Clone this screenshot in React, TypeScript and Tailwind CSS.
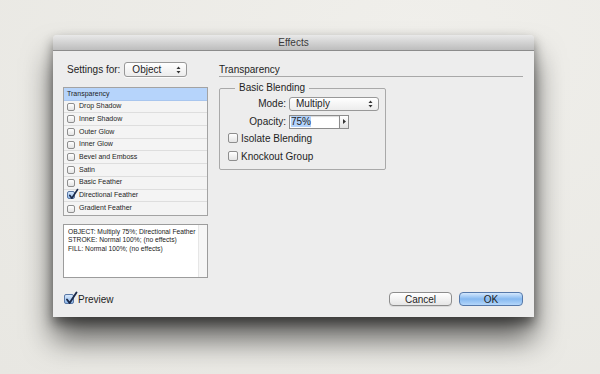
import React from 'react'

const effects = [
  { name: 'Drop Shadow', on: false },
  { name: 'Inner Shadow', on: false },
  { name: 'Outer Glow', on: false },
  { name: 'Inner Glow', on: false },
  { name: 'Bevel and Emboss', on: false },
  { name: 'Satin', on: false },
  { name: 'Basic Feather', on: false },
  { name: 'Directional Feather', on: true },
  { name: 'Gradient Feather', on: false },
]

function Check({ size, on }: { size: number; on: boolean }) {
  return (
    <span
      className={`relative shrink-0 rounded-[2px] border ${
        on
          ? 'border-[#5a78a6] bg-gradient-to-b from-[#d6e7fb] to-[#8db8ea]'
          : 'border-[#8e8e8e] bg-gradient-to-b from-white to-[#e4e4e4]'
      }`}
      style={{ width: size, height: size }}
    >
      {on && (
        <svg
          className="absolute left-0 top-[-3px] overflow-visible"
          width={size + 2}
          height={size + 3}
          viewBox="0 0 12 13"
        >
          <path d="M2 7.5 L4.6 11 L11.5 0.5" fill="none" stroke="#1b2a4a" strokeWidth="1.9" strokeLinecap="round" strokeLinejoin="round" />
        </svg>
      )}
    </span>
  )
}

function UpDown() {
  return (
    <svg width="5" height="8" viewBox="0 0 5 8" className="shrink-0">
      <path d="M0.5 3 L2.5 0.5 L4.5 3 Z" fill="#333" />
      <path d="M0.5 5 L2.5 7.5 L4.5 5 Z" fill="#333" />
    </svg>
  )
}

export default function App() {
  return (
    <div className="w-[600px] h-[374px] overflow-hidden bg-[#ebeae5] bg-[radial-gradient(ellipse_at_70%_10%,#f0efeb,#e8e7e2)] pt-[35px] pl-[53px] font-['Liberation_Sans',Arial,sans-serif] text-[#1e1e1e]">
      <div className="w-[481px] h-[282px] flex flex-col rounded-t-[4px] shadow-[0_22px_30px_rgba(0,0,0,0.6),0_6px_12px_rgba(0,0,0,0.45)]">
        {/* title bar */}
        <div className="h-[16px] shrink-0 rounded-t-[4px] border-b border-[#8c8c8c] bg-gradient-to-b from-[#e9e9e9] to-[#bdbdbd] text-center text-[10px] leading-[15px] text-[#3a3a3a]">
          Effects
        </div>

        {/* body */}
        <div className="flex-1 flex flex-col bg-[#ededed] pl-[10px] pr-[11px] pt-[11px] pb-[11px]">
          <div className="flex">
            {/* left column */}
            <div className="w-[145px] shrink-0 flex flex-col">
              <div className="h-[15px] flex items-center pl-[4px] text-[10px]">
                <span>Settings for:</span>
                <div className="ml-[4px] w-[63px] h-[15px] flex items-center justify-between rounded-[3px] border border-[#989898] bg-gradient-to-b from-white to-[#ececec] pl-[7px] pr-[5px] shadow-[0_1px_0_rgba(255,255,255,0.8)]">
                  <span className="text-[10px]">Object</span>
                  <UpDown />
                </div>
              </div>

              <div className="mt-[10px] border border-[#a3a3a3] bg-[#f4f4f4]">
                <div className="h-[12.7px] flex items-center bg-[#b6d4fb] pl-[3px] text-[7px] border-b border-[#a9c6ee]">
                  Transparency
                </div>
                {effects.map((e) => (
                  <div key={e.name} className="h-[12.7px] flex items-center pl-[3px] border-b border-[#dedede] last:border-b-0 text-[7px]">
                    <Check size={8} on={e.on} />
                    <span className="ml-[4px]">{e.name}</span>
                  </div>
                ))}
              </div>

              <div className="mt-[8px] h-[54px] flex border border-[#9c9c9c] bg-white">
                <div className="flex-1 pl-[4px] pt-[3px] text-[6.7px] leading-[8.5px] text-[#1a1a1a]">
                  <div>OBJECT: Multiply 75%; Directional Feather</div>
                  <div>STROKE: Normal 100%; (no effects)</div>
                  <div>FILL: Normal 100%; (no effects)</div>
                </div>
                <div className="w-[9px] border-l border-[#e6e6e6] bg-[#f6f6f6]" />
              </div>
            </div>

            {/* right column */}
            <div className="flex-1 ml-[11px] flex flex-col">
              <div className="h-[15px] flex items-center border-b border-[#a8a8a8] text-[10px]">
                Transparency
              </div>

              <fieldset className="mt-[5px] w-[167px] border border-[#a9a9a9] rounded-[2px] pl-[8px] pb-[8px]">
                <legend className="ml-[7px] px-[4px] text-[10px] leading-[12px]">Basic Blending</legend>
                <div className="mt-[2px] grid grid-cols-[58px_auto] gap-x-[3px] gap-y-[3px] items-center text-[10px]">
                  <span className="text-right">Mode:</span>
                  <div className="w-[90px] h-[14px] flex items-center justify-between rounded-[3px] border border-[#989898] bg-gradient-to-b from-white to-[#ececec] pl-[6px] pr-[5px]">
                    <span>Multiply</span>
                    <UpDown />
                  </div>
                  <span className="text-right">Opacity:</span>
                  <div className="flex h-[14px]">
                    <div className="w-[51px] h-[14px] flex items-center border border-[#8c8c8c] bg-white pl-[1px] shadow-[inset_0_1px_1px_rgba(0,0,0,0.15)]">
                      <span className="bg-[#b3d3fb] leading-[11px]">75%</span>
                    </div>
                    <div className="w-[9px] h-[14px] flex items-center justify-center border border-l-0 border-[#8c8c8c] bg-gradient-to-b from-white to-[#e2e2e2]">
                      <svg width="3" height="5" viewBox="0 0 3 5">
                        <path d="M0 0 L3 2.5 L0 5 Z" fill="#333" />
                      </svg>
                    </div>
                  </div>
                </div>
                <div className="mt-[4px] flex items-center h-[10px] text-[10px]">
                  <Check size={10} on={false} />
                  <span className="ml-[3px]">Isolate Blending</span>
                </div>
                <div className="mt-[8px] flex items-center h-[10px] text-[10px]">
                  <Check size={10} on={false} />
                  <span className="ml-[3px]">Knockout Group</span>
                </div>
              </fieldset>
            </div>
          </div>

          {/* bottom row */}
          <div className="mt-auto h-[14px] flex items-center">
            <div className="ml-[1px] flex items-center text-[10px]">
              <Check size={10} on={true} />
              <span className="ml-[4px]">Preview</span>
            </div>
            <div className="ml-auto flex gap-[7px]">
              <div className="w-[63px] h-[14px] flex items-center justify-center rounded-[4px] border border-[#8d8d8d] bg-gradient-to-b from-white to-[#e6e6e6] text-[10px] shadow-[0_1px_0_rgba(0,0,0,0.08)]">
                Cancel
              </div>
              <div className="w-[64px] h-[14px] flex items-center justify-center rounded-[4px] border border-[#5679aa] bg-gradient-to-b from-[#d4e8fd] via-[#86b9f0] to-[#b3d6fa] text-[10px]">
                OK
              </div>
            </div>
          </div>
        </div>
      </div>
    </div>
  )
}
